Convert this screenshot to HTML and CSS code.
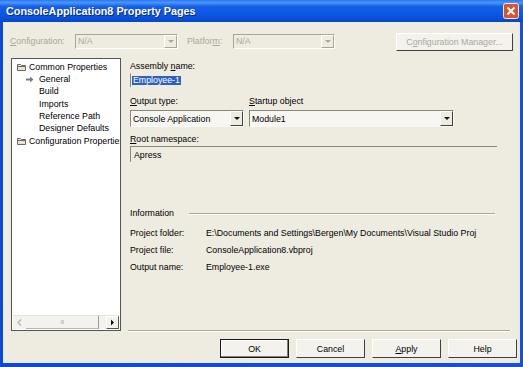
FILE: index.html
```html
<!DOCTYPE html>
<html>
<head>
<meta charset="utf-8">
<link rel="stylesheet" href="styles.css">
</head>
<body>
<div class="window">
  <div class="titlebar">
    <span class="title">ConsoleApplication8 Property Pages</span>
    <span class="close"><svg width="16" height="16" viewBox="0 0 16 16"><rect x="0.5" y="0.5" width="15" height="15" rx="2" fill="#d6542e" stroke="#f3e6dc"/><path d="M4.5 4.5 L11.5 11.5 M11.5 4.5 L4.5 11.5" stroke="#fff" stroke-width="2"/></svg></span>
  </div>
  <div class="frame">
    <div class="client">
      <div class="toprow">
        <span class="lbl dis cfg-lbl"><u>C</u>onfiguration:</span>
        <div class="combo dis cfg-combo"><span class="ctext">N/A</span><span class="arrowbtn"><span class="tri"></span></span></div>
        <span class="lbl dis plat-lbl">Platfor<u>m</u>:</span>
        <div class="combo dis plat-combo"><span class="ctext">N/A</span><span class="arrowbtn"><span class="tri"></span></span></div>
        <button class="btn dis cm-btn">C<u>o</u>nfiguration Manager...</button>
      </div>
      <div class="main">
        <div class="tree">
          <div class="items">
            <div class="item top"><svg class="ficon" width="9" height="8" viewBox="0 0 9 8"><path d="M0.5 1.5 H3.5 L4.5 2.5 H8.5 V7.5 H0.5 Z" fill="#e8e4d0" stroke="#6b6b6b"/><path d="M0.5 3.5 H8.5" stroke="#6b6b6b"/></svg>Common Properties</div>
            <div class="item child sel"><svg class="aicon" width="8" height="7" viewBox="0 0 8 7"><path d="M0 2.5 H4 V0.5 L7.5 3.5 L4 6.5 V4.5 H0 Z" fill="#6f7f8f"/></svg>General</div>
            <div class="item child">Build</div>
            <div class="item child">Imports</div>
            <div class="item child">Reference Path</div>
            <div class="item child">Designer Defaults</div>
            <div class="item top"><svg class="ficon" width="9" height="8" viewBox="0 0 9 8"><path d="M0.5 1.5 H3.5 L4.5 2.5 H8.5 V7.5 H0.5 Z" fill="#e8e4d0" stroke="#6b6b6b"/><path d="M0.5 3.5 H8.5" stroke="#6b6b6b"/></svg>Configuration Properties</div>
          </div>
          <div class="hscroll">
            <span class="sbtn left"><svg width="5" height="7" viewBox="0 0 5 7"><path d="M4 0.5 L1 3.5 L4 6.5" fill="none" stroke="#b8b5a8" stroke-width="1.3"/></svg></span>
            <span class="thumb"><span class="grip">III</span></span>
            <span class="track"></span>
            <span class="sbtn right"><svg width="5" height="7" viewBox="0 0 5 7"><path d="M1 0.5 L4 3.5 L1 6.5 Z" fill="#111"/></svg></span>
          </div>
        </div>
        <div class="page">
          <div class="lbl">Assembly <u>n</u>ame:</div>
          <div class="textbox asm"><span class="selected">Employee-1</span></div>
          <div class="labels-row">
            <span class="lbl ot-lbl"><u>O</u>utput type:</span>
            <span class="lbl"><u>S</u>tartup object</span>
          </div>
          <div class="combos-row">
            <div class="combo ot-combo"><span class="ctext">Console Application</span><span class="arrowbtn"><span class="tri"></span></span></div>
            <div class="combo so-combo"><span class="ctext">Module1</span><span class="arrowbtn"><span class="tri"></span></span></div>
          </div>
          <div class="lbl rn-lbl"><u>R</u>oot namespace:</div>
          <div class="textbox rn"><span class="ttext">Apress</span></div>
          <div class="info-head"><span class="lbl">Information</span><span class="rule"></span></div>
          <div class="info-row"><span class="ilbl">Project folder:</span><span class="ival">E:\Documents and Settings\Bergen\My Documents\Visual Studio Proj</span></div>
          <div class="info-row"><span class="ilbl">Project file:</span><span class="ival">ConsoleApplication8.vbproj</span></div>
          <div class="info-row"><span class="ilbl">Output name:</span><span class="ival">Employee-1.exe</span></div>
        </div>
      </div>
      <div class="buttons">
        <button class="btn dbtn def">OK</button>
        <button class="btn dbtn">Cancel</button>
        <button class="btn dbtn"><u>A</u>pply</button>
        <button class="btn dbtn">Help</button>
      </div>
    </div>
  </div>
</div>
</body>
</html>
```

FILE: styles.css
```css
* { box-sizing: border-box; }
html, body { margin: 0; padding: 0; }
body {
  width: 523px;
  height: 367px;
  overflow: hidden;
  font-family: "Liberation Sans", Arial, sans-serif;
  font-size: 8.8px;
  color: #000;
  background: #0a48d6;
}
u { text-decoration: underline; }
.window {
  width: 523px;
  height: 367px;
  display: flex;
  flex-direction: column;
}
.titlebar {
  height: 22px;
  flex: none;
  display: flex;
  align-items: center;
  justify-content: space-between;
  padding: 0 4px 0 6px;
  background: linear-gradient(#2a78f2 0%, #4a95fb 12%, #155fe9 30%, #0a55e2 70%, #0747c9 100%);
}
.title {
  color: #fff;
  font-weight: bold;
  font-size: 10.8px;
  text-shadow: 1px 1px 0 #0b2a8a;
}
.close { display: flex; margin-top: -1px; }
.frame {
  flex: 1;
  padding: 0 3px 4px 3px;
  background: linear-gradient(90deg, #0a4ad8, #1650dc);
  display: flex;
}
.client {
  flex: 1;
  background: #eeebe1;
  padding: 0 7px;
  display: flex;
  flex-direction: column;
}
.toprow {
  margin-top: 10px;
  height: 18px;
  display: flex;
  align-items: center;
}
.lbl { line-height: 11px; white-space: nowrap; }
.dis { color: #aca899; }
.cfg-lbl { width: 65px; }
.combo {
  height: 15px;
  display: flex;
  align-items: center;
  border: 1px solid;
  border-color: #8a877c #fbfaf6 #fbfaf6 #8a877c;
  background: #f7f6f1;
}
.combo.dis { background: #eeebe1; border-color: #a9a699 #fff #fff #a9a699; }
.ctext { flex: 1; padding-left: 2px; white-space: nowrap; overflow: hidden; }
.arrowbtn {
  width: 13px;
  height: 100%;
  display: flex;
  align-items: center;
  justify-content: center;
  border: 1px solid;
  border-color: #fff #404040 #404040 #fff;
  background: #eeebe1;
}
.combo.dis .arrowbtn { border-color: #fff #a9a699 #a9a699 #fff; }
.tri {
  width: 0; height: 0;
  border-left: 3px solid transparent;
  border-right: 3px solid transparent;
  border-top: 3px solid #111;
}
.combo.dis .tri { border-top-color: #aca899; }
.cfg-combo { width: 103px; }
.plat-lbl { margin-left: 9px; width: 46px; }
.plat-combo { width: 102px; }
.btn {
  font-family: inherit;
  font-size: 8.8px;
  padding: 0;
  background: #f3f2ec;
  border: 1px solid;
  border-color: #fff #404040 #404040 #fff;
  color: #000;
}
.btn.dis { color: #aca899; }
.cm-btn {
  margin-left: auto;
  width: 117px;
  height: 18px;
  margin-top: 1px;
}
.main {
  margin-top: 8px;
  height: 273px;
  display: flex;
}
.tree {
  margin-left: 1px;
  width: 110px;
  background: #fff;
  border: 1px solid #555;
  display: flex;
  flex-direction: column;
  overflow: hidden;
}
.items { flex: 1; padding-top: 1.5px; overflow: hidden; }
.item {
  height: 12.4px;
  line-height: 12.4px;
  white-space: nowrap;
  display: flex;
  align-items: center;
}
.item.top { padding-left: 5px; }
.item.child { padding-left: 27px; }
.item.sel { padding-left: 14px; }
.ficon { margin-right: 3px; flex: none; }
.aicon { margin-right: 5px; flex: none; }
.hscroll {
  height: 14px;
  flex: none;
  display: flex;
  background: #f3f2ec;
  border-top: 1px solid #e4e2d8;
  margin: 0 1px 1px 1px;
}
.sbtn {
  width: 13px;
  display: flex;
  align-items: center;
  justify-content: center;
  background: #f3f2ec;
}
.sbtn.right { border: 1px solid; border-color: #fff #555 #555 #fff; }
.thumb {
  width: 73px;
  display: flex;
  align-items: center;
  justify-content: center;
  border-right: 1px solid #999;
  border-bottom: 1px solid #b8b5a8;
}
.grip { color: #b8b5a8; font-size: 6px; letter-spacing: -0.5px; }
.track { flex: 1; }
.page {
  margin-left: 7px;
  margin-right: 3px;
  flex: 1;
  padding: 3px 0 0 2px;
  border-bottom: 1px solid #aca899;
  box-shadow: 0 1px 0 #fff;
}
.textbox {
  border-left: 1px solid #8a877c;
  border-top: 1px solid transparent;
  display: flex;
  align-items: center;
}
.asm { margin-top: 1px; height: 14px; width: 367px; }
.selected {
  margin-left: 1px;
  background: #2f5fbf;
  color: #fff;
  line-height: 9px;
  padding: 0 1px;
}
.labels-row { margin-top: 9px; display: flex; }
.ot-lbl { width: 119px; }
.combos-row { margin-top: 3px; display: flex; gap: 5px; }
.combos-row .combo { height: 17px; }
.ot-combo { width: 114px; }
.so-combo { width: 205px; }
.rn-lbl { margin-top: 7px; }
.rn {
  margin-top: 1px;
  height: 16px;
  width: 367px;
  border-top: 1px solid #8a877c;
}
.ttext { padding-left: 3px; }
.info-head {
  margin-top: 46px;
  display: flex;
  align-items: center;
  width: 365px;
}
.info-head .lbl { width: 59px; }
.rule {
  flex: 1;
  height: 2px;
  border-top: 1px solid #aca899;
  border-bottom: 1px solid #fff;
}
.info-row {
  margin-top: 6px;
  height: 11px;
  line-height: 11px;
  display: flex;
  white-space: nowrap;
}
.info-head + .info-row { margin-top: 9px; }
.ilbl { width: 76px; flex: none; }
.ival { width: 290px; overflow: hidden; }
.buttons {
  margin-top: 8px;
  margin-right: -4px;
  display: flex;
  justify-content: flex-end;
  gap: 7px;
}
.dbtn { width: 69px; height: 19px; }
.dbtn.def { border: 1px solid #1a1a1a; box-shadow: inset -1px -1px 0 #808080, inset 1px 1px 0 #fff; }
```
